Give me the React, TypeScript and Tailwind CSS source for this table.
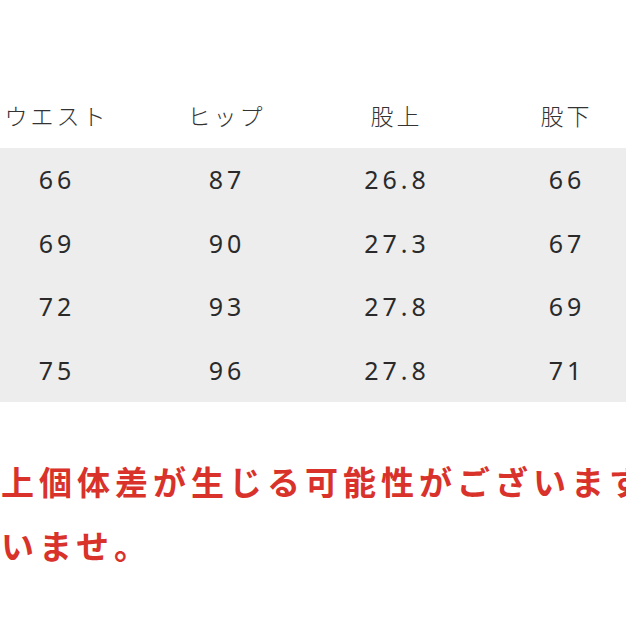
const headers = ['ウエスト', 'ヒップ', '股上', '股下'];

const rows = [
  ['66', '87', '26.8', '66'],
  ['69', '90', '27.3', '67'],
  ['72', '93', '27.8', '69'],
  ['75', '96', '27.8', '71'],
];

export default function App() {
  return (
    <div
      className="w-[626px] h-[626px] overflow-hidden bg-white text-[#333333]"
      style={{ fontFamily: '"Noto Sans CJK JP", "Noto Sans", sans-serif' }}
    >
      <div className="h-[82px]" />
      {/* header */}
      <div className="-ml-[30px] grid grid-cols-[repeat(4,170px)] h-[66px] items-center">
        {headers.map(h => (
          <div key={h} className="text-center text-[23px] tracking-[3px] pl-[3px] font-light">
            {h}
          </div>
        ))}
      </div>

      {/* values */}
      <div className="bg-[#ededed] h-[254px] flex flex-col">
        {rows.map((r, i) => (
          <div key={i} className="-ml-[30px] grid grid-cols-[repeat(4,170px)] h-[63.5px] items-center">
            {r.map((v, j) => (
              <div
                key={j}
                className="text-center text-[25px] tracking-[4px] pl-[4px] font-normal text-[#2a2a2a]"
                style={{ fontFamily: '"Noto Sans", "Noto Sans CJK JP", sans-serif' }}
              >
                {v}
              </div>
            ))}
          </div>
        ))}
      </div>

      {/* note */}
      <div className="mt-[47px] text-[#d8322b] font-bold text-[33px] tracking-[5px] leading-[64px] whitespace-nowrap pl-[1px]">
        <p>上個体差が生じる可能性がございます。</p>
        <p>いませ。</p>
      </div>
    </div>
  );
}
